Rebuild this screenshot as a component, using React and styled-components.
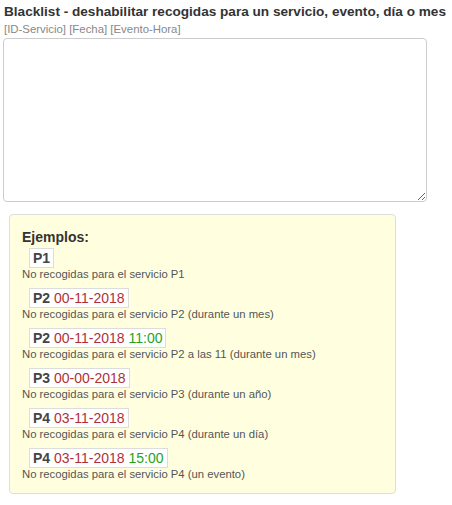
import React from "react";
import styled, { createGlobalStyle } from "styled-components";

const examples = [
  { code: "P1", desc: "No recogidas para el servicio P1" },
  { code: "P2", date: "00-11-2018", desc: "No recogidas para el servicio P2 (durante un mes)" },
  {
    code: "P2",
    date: "00-11-2018",
    time: "11:00",
    desc: "No recogidas para el servicio P2 a las 11 (durante un mes)"
  },
  { code: "P3", date: "00-00-2018", desc: "No recogidas para el servicio P3 (durante un año)" },
  { code: "P4", date: "03-11-2018", desc: "No recogidas para el servicio P4 (durante un día)" },
  { code: "P4", date: "03-11-2018", time: "15:00", desc: "No recogidas para el servicio P4 (un evento)" }
];

const GlobalStyle = createGlobalStyle`
  body {
    margin: 0;
    background: #fff;
    font-family: "Liberation Sans", Arial, sans-serif;
    color: #333;
  }
`;

const App = () => (
  <Page>
    <GlobalStyle />
    <Title>Blacklist - deshabilitar recogidas para un servicio, evento, día o mes</Title>
    <Hint>[ID-Servicio] [Fecha] [Evento-Hora]</Hint>
    <Editor />
    <ExampleBox>
      <ExampleHeader>Ejemplos:</ExampleHeader>
      {examples.map((ex, i) => (
        <Example key={i}>
          <Code>
            <Service>{ex.code}</Service>
            {ex.date && <DatePart> {ex.date}</DatePart>}
            {ex.time && <TimePart> {ex.time}</TimePart>}
          </Code>
          <Description>{ex.desc}</Description>
        </Example>
      ))}
    </ExampleBox>
  </Page>
);

const Page = styled.div`
  padding: 3px 3px 0 3px;
  display: flex;
  flex-direction: column;
  align-items: flex-start;
`;

const Title = styled.div`
  font-size: 13.6px;
  font-weight: bold;
  line-height: 18px;
  padding-left: 1px;
  white-space: nowrap;
  color: #333;
`;

const Hint = styled.div`
  font-size: 11.4px;
  line-height: 17px;
  padding-left: 1px;
  color: #888;
`;

const Editor = styled.textarea`
  box-sizing: border-box;
  width: 424px;
  height: 164px;
  margin: 0;
  border: 1px solid #ccc;
  border-radius: 4px;
  font-family: "Liberation Sans", Arial, sans-serif;
  font-size: 12px;
  padding: 4px 6px;
  outline: none;
`;

const ExampleBox = styled.div`
  box-sizing: border-box;
  margin: 12px 0 0 6px;
  width: 387px;
  padding: 14px 12px 12px 12px;
  background: #ffffe0;
  border: 1px solid #ddd;
  border-radius: 4px;
`;

const ExampleHeader = styled.div`
  font-size: 14px;
  font-weight: bold;
  line-height: 16px;
  margin-bottom: 3px;
  color: #333;
`;

const Example = styled.div`
  display: flex;
  flex-direction: column;
  align-items: flex-start;
  margin-bottom: 7px;

  &:last-child {
    margin-bottom: 0;
  }
`;

const Code = styled.div`
  box-sizing: border-box;
  margin-left: 7px;
  height: 20px;
  padding: 0 3px;
  background: #fff;
  border: 1px solid #ddd;
  font-size: 14px;
  line-height: 18px;
  white-space: pre;
`;

const Service = styled.span`
  font-weight: bold;
  color: #444;
`;

const DatePart = styled.span`
  color: #b0303a;
`;

const TimePart = styled.span`
  color: #1fa31f;
`;

const Description = styled.div`
  font-size: 11.3px;
  line-height: 13px;
  color: #555;
`;

export default App;
